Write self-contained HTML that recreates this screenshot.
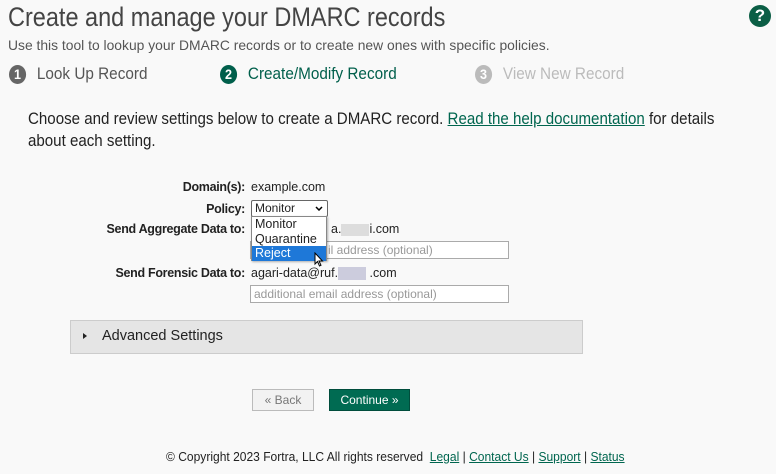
<!DOCTYPE html>
<html><head><meta charset="utf-8"><style>
*{margin:0;padding:0;box-sizing:border-box}
body{width:776px;height:474px;background:#f9f9f9;font-family:"Liberation Sans",Arial,sans-serif;color:#222;position:relative;overflow:hidden}
.a{position:absolute;white-space:nowrap}
.n{transform-origin:0 50%;transform:scaleX(.86)}
.circ{display:inline-block;width:19px;height:19px;border-radius:50%;color:#fff;font-weight:bold;font-size:14px;text-align:center;line-height:19px;vertical-align:middle;margin-right:12px}
.lbl{font-weight:bold;font-size:12.5px;text-align:right;width:245px;left:0;color:#222;letter-spacing:-0.3px}
.val{font-size:12.5px;left:251px}
.inp{position:absolute;left:250px;width:259px;height:18px;border:1px solid #aaa;background:#fff;font-size:12px;color:#999;padding:1px 3px;line-height:15px}
a{color:#00664f;text-decoration:underline}
</style></head><body>
<div class="a n" style="left:8px;top:2px;font-size:27px;color:#444;transform:scaleX(.87)">Create and manage your DMARC records</div>
<div class="a" style="left:749px;top:5px;width:22px;height:22px;border-radius:50%;background:#0b5e45;color:#fff;font-weight:bold;font-size:17px;text-align:center;line-height:22px">?</div>
<div class="a n" style="left:8px;top:37px;font-size:14px;color:#555;transform:scaleX(.99)">Use this tool to lookup your DMARC records or to create new ones with specific policies.</div>
<div class="a n" style="left:9px;top:64px;font-size:17px;color:#555;transform:scaleX(.9)"><span class="circ" style="background:#666">1</span>Look Up Record</div>
<div class="a n" style="left:220px;top:64px;font-size:17px;color:#005f4b;transform:scaleX(.9)"><span class="circ" style="background:#005f4b">2</span>Create/Modify Record</div>
<div class="a n" style="left:475px;top:64px;font-size:17px;color:#bbb;transform:scaleX(.9)"><span class="circ" style="background:#bbb">3</span>View New Record</div>
<div class="a n" style="left:28px;top:109px;font-size:17px;color:#222;transform:scaleX(.888)">Choose and review settings below to create a DMARC record. <a>Read the help documentation</a> for details</div>
<div class="a n" style="left:28px;top:131px;font-size:17px;color:#222;transform:scaleX(.888)">about each setting.</div>

<div class="a lbl" style="top:180px">Domain(s):</div><div class="a val" style="top:180px">example.com</div>
<div class="a lbl" style="top:202px">Policy:</div>
<div class="a lbl" style="top:222px">Send Aggregate Data to:</div><div class="a val" style="top:222px;left:331px">a.<span style="display:inline-block;width:28px;height:12px;background:#ddd;vertical-align:middle"></span>i.com</div>
<div class="inp" style="top:241px;color:#999"><span style="margin-left:74px">il address (optional)</span></div>
<div class="a lbl" style="top:266px">Send Forensic Data to:</div><div class="a val" style="top:266px">agari-data@ruf.<span style="display:inline-block;width:28px;height:13px;background:#ccd;vertical-align:middle"></span> .com</div>
<div class="inp" style="top:285px">additional email address (optional)</div>

<div class="a" style="left:251px;top:200px;width:77px;height:17px;border:1px solid #666;border-radius:2px;background:#fff;font-size:12px;padding-left:3px;line-height:15px">Monitor<svg style="position:absolute;right:4px;top:5px" width="8" height="5" viewBox="0 0 8 5"><path d="M1 1 L4 4 L7 1" fill="none" stroke="#000" stroke-width="1.5"/></svg></div>
<div class="a" style="left:251px;top:216px;width:76px;height:45px;border:1px solid #888;background:#fff;font-size:12.5px;line-height:14.5px;box-shadow:1px 1px 2px rgba(0,0,0,.3)">
<div style="padding-left:3px">Monitor</div><div style="padding-left:3px">Quarantine</div><div style="padding-left:3px;background:#1e78d8;color:#fff">Reject</div></div>
<svg class="a" style="left:314px;top:252px" width="10" height="15" viewBox="0 0 10 15"><path d="M1 1 L1 12 L3.5 9.5 L5.5 14 L7 13.3 L5 9 L8.5 9 Z" fill="#fff" stroke="#000" stroke-width="1"/></svg>

<div class="a" style="left:70px;top:320px;width:513px;height:34px;background:#e5e5e5;border:1px solid #ccc"></div>
<div class="a" style="left:83px;top:333px;width:0;height:0;border-left:4px solid #222;border-top:3.5px solid transparent;border-bottom:3.5px solid transparent"></div>
<div class="a" style="left:102px;top:328px;font-size:14.5px;color:#222">Advanced Settings</div>

<div class="a" style="left:252px;top:389px;width:62px;height:22px;border:1px solid #bbb;background:#f2f2f2;color:#777;font-size:12px;text-align:center;line-height:20px">« Back</div>
<div class="a" style="left:329px;top:389px;width:81px;height:22px;border:1px solid #004d3c;background:#006b52;color:#fff;font-size:12px;text-align:center;line-height:20px">Continue »</div>

<div class="a n" style="left:166px;top:450px;font-size:12.5px;color:#222;transform:scaleX(.963)">© Copyright 2023 Fortra, LLC All rights reserved&nbsp; <a>Legal</a> | <a>Contact Us</a> | <a>Support</a> | <a>Status</a></div>
</body></html>
